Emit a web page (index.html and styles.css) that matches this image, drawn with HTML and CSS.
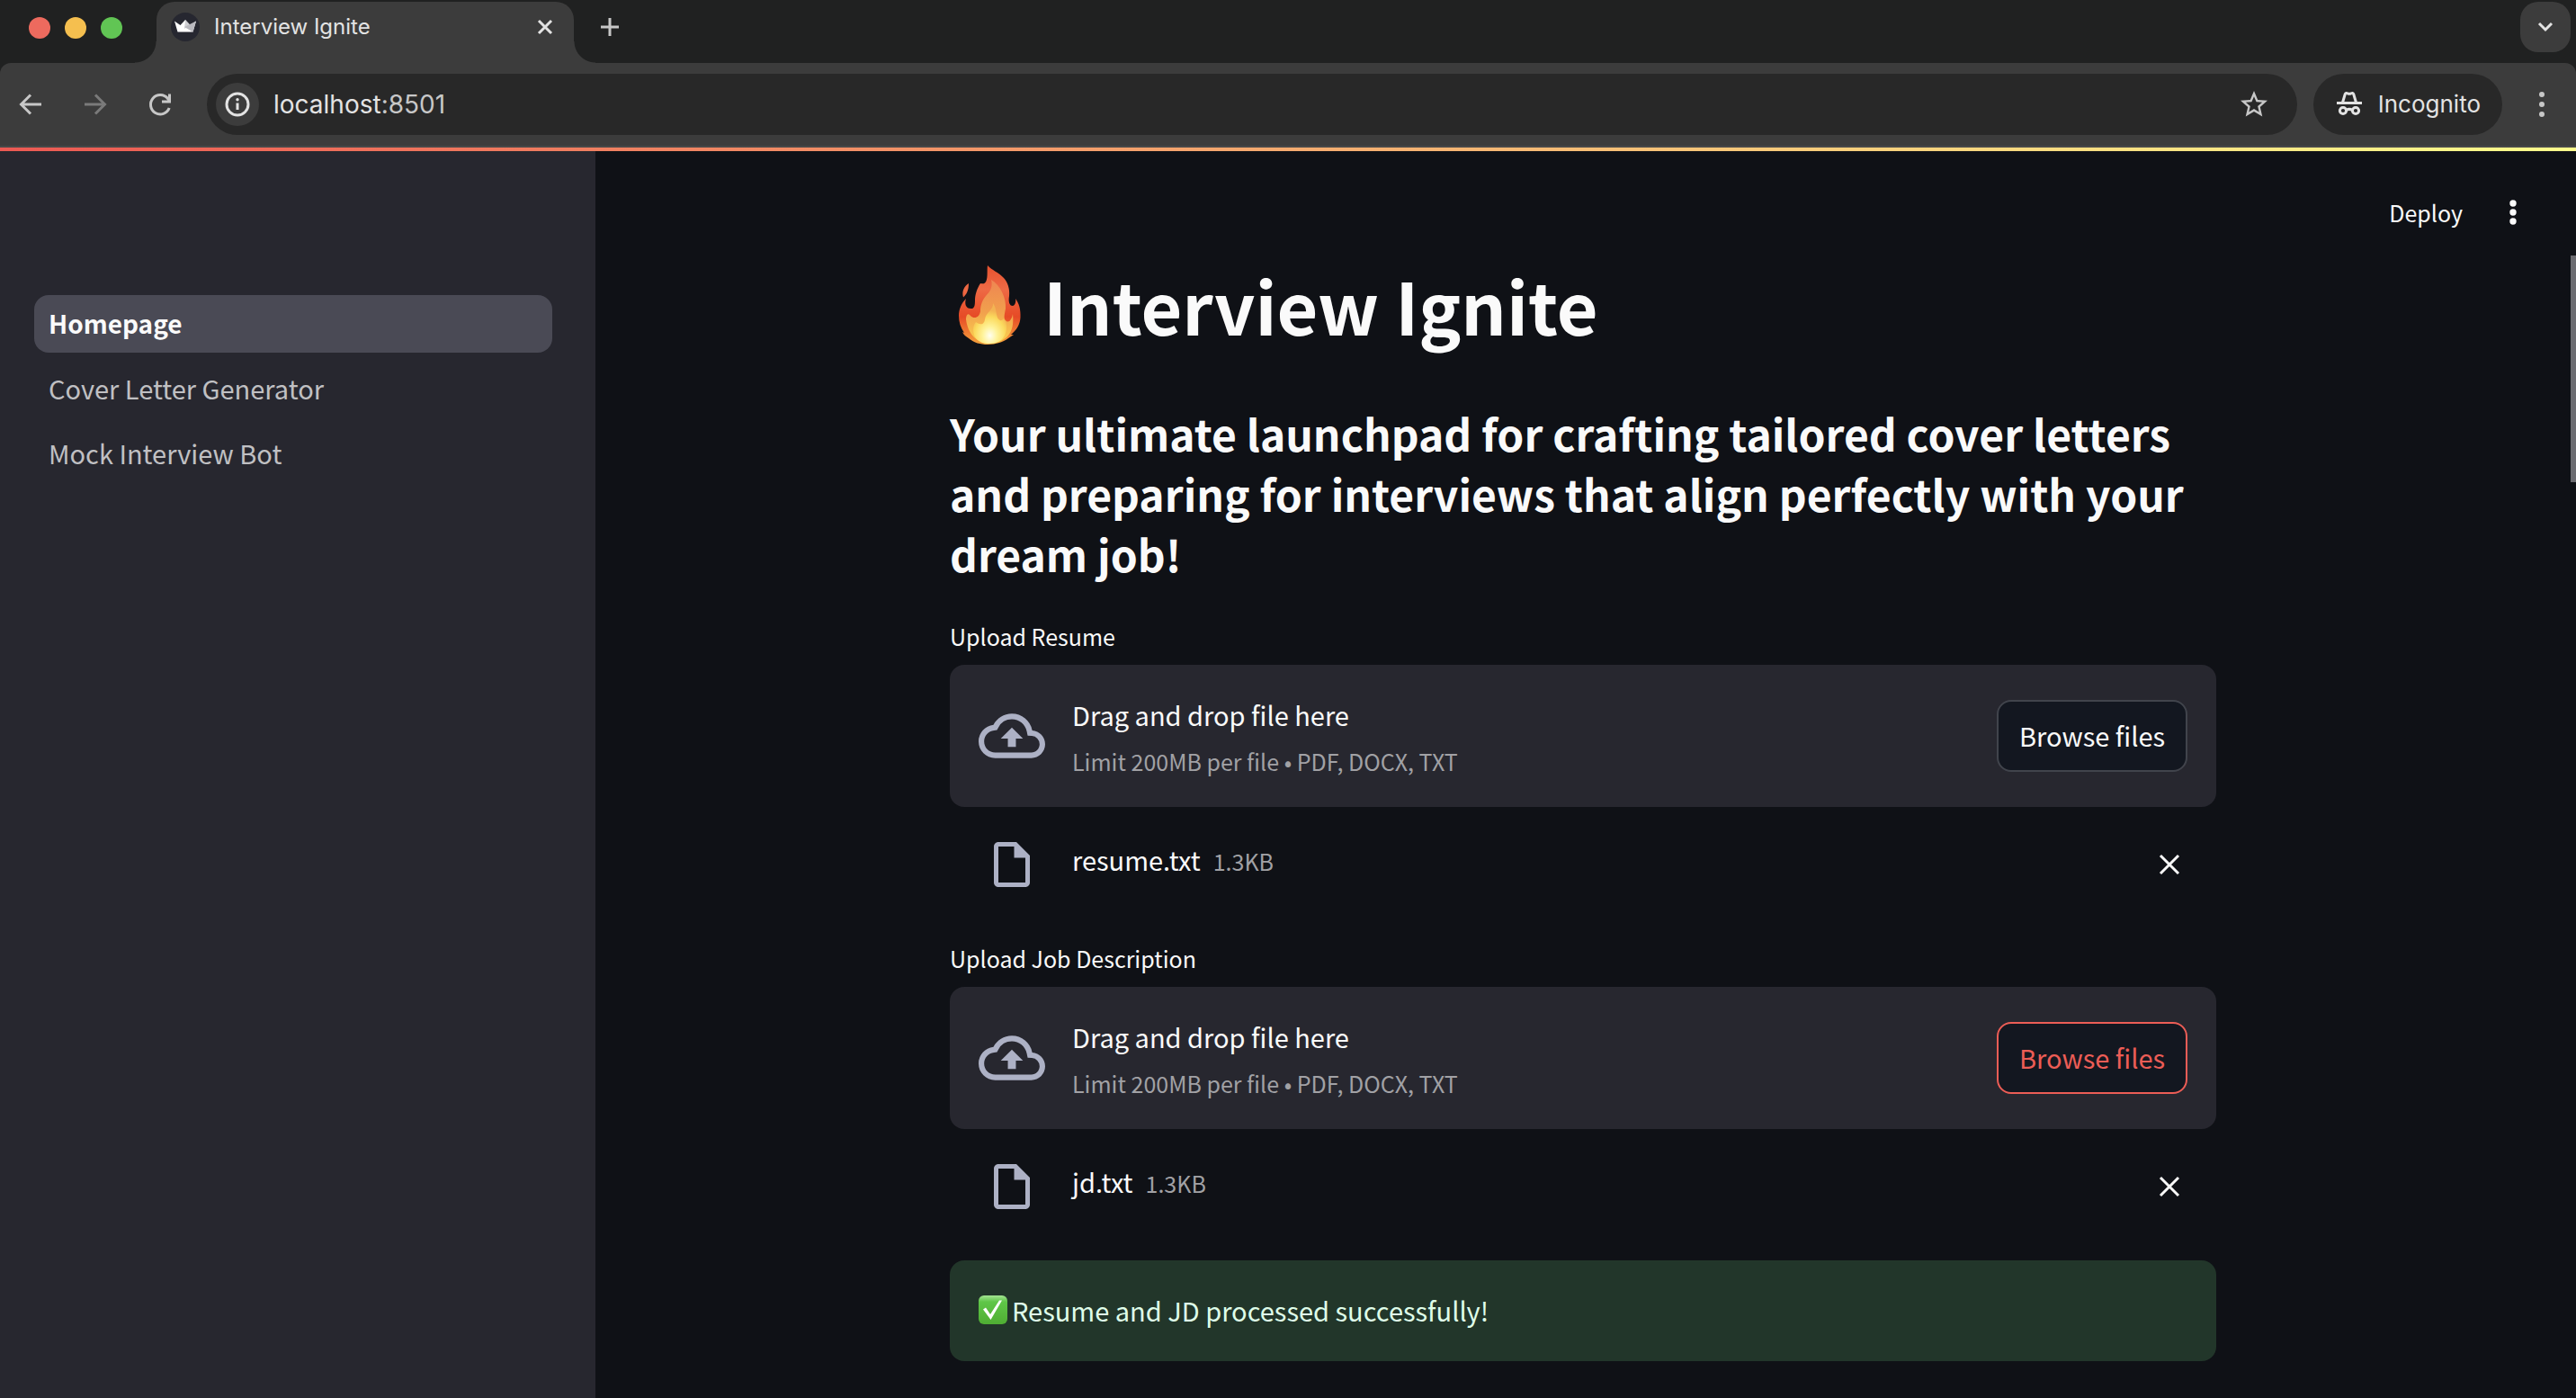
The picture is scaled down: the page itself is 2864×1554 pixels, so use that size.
FILE: index.html
```html
<!DOCTYPE html>
<html lang="en">
<head>
<meta charset="utf-8">
<meta name="viewport" content="width=device-width, initial-scale=1">
<title>Interview Ignite</title>
<link rel="stylesheet" href="styles.css">
</head>
<body>
<div class="browser">
  <div class="tabstrip">
    <div class="lights"><span class="light light-red"></span><span class="light light-yellow"></span><span class="light light-green"></span></div>
    <div class="tab">
      <svg class="favicon" viewBox="0 0 32 32" aria-hidden="true"><circle cx="16" cy="16" r="16" fill="#262730"/><path d="M4 9.500l6.500 4.500L16 8l5.500 6 6.500-4.500L24.500 21.500h-17z" fill="#fff"/><path d="M16 8l5.500 6L15 18z" fill="#d0d0d4"/><path d="M28 9.500L24.500 21.500 15 16z" fill="#b9b9bf"/></svg>
      <span class="tab-title">Interview Ignite</span>
      <button class="icon-button" aria-label="Close tab"><svg width="20" height="20" viewBox="0 0 20 20"><path d="M3 3l14 14M17 3L3 17" class="stroke"/></svg></button>
    </div>
    <button class="icon-button new-tab" aria-label="New tab"><svg width="24" height="24" viewBox="0 0 24 24"><path d="M12 2v20M2 12h20" class="stroke"/></svg></button>
    <button class="icon-button tab-search" aria-label="Search tabs"><svg width="20" height="20" viewBox="0 0 20 20"><path d="M3 6l7 7 7-7" class="stroke"/></svg></button>
  </div>
  <div class="toolbar">
    <div class="nav-buttons">
      <button class="icon-button" aria-label="Back"><svg width="28" height="28" viewBox="0 0 28 28"><path d="M26 14H4M14 3.500L3.500 14 14 24.500" class="stroke"/></svg></button>
      <button class="icon-button forward" aria-label="Forward" disabled><svg width="28" height="28" viewBox="0 0 28 28"><path d="M2 14h22M14 3.500L24.500 14 14 24.500" class="stroke"/></svg></button>
      <button class="icon-button" aria-label="Reload"><svg width="28" height="28" viewBox="0 0 28 28"><path d="M24.200 18A10.700 10.700 0 1 1 22.500 7.500L24 9.500" class="stroke"/><path d="M24.500 2.500v8.500h-8.500" class="stroke"/></svg></button>
    </div>
    <div class="omnibox">
      <button class="icon-button site-info" aria-label="View site information"><svg width="28" height="28" viewBox="0 0 28 28"><circle cx="14" cy="14" r="12" class="stroke"/><path d="M14 12.500v7.500" class="stroke"/><circle cx="14" cy="8.700" r="1.700" fill="currentColor"/></svg></button>
      <div class="url">localhost<span class="port">:8501</span></div>
      <button class="icon-button" aria-label="Bookmark this tab"><svg width="36" height="36" viewBox="0 0 24 24"><path d="M22 9.240l-7.190-.62L12 2 9.190 8.630 2 9.240l5.460 4.730L5.820 21 12 17.270 18.180 21l-1.630-7.030L22 9.240zM12 15.400l-3.760 2.270 1-4.280-3.320-2.880 4.380-.38L12 6.100l1.710 4.040 4.380.38-3.320 2.880 1 4.280L12 15.400z" fill="currentColor"/></svg></button>
    </div>
    <div class="incognito">
      <svg width="32" height="32" viewBox="0 0 32 32" aria-hidden="true"><path d="M2 14.500h28" class="stroke"/><path d="M8.500 14l2.800-9.500c.5-1.300 1.700-1.300 2.600-.8 1.300.8 2.900.8 4.200 0 .9-.5 2.100-.5 2.600.8L23.500 14" class="stroke"/><circle cx="9" cy="23" r="3.600" class="stroke"/><circle cx="23" cy="23" r="3.600" class="stroke"/><path d="M12.500 22.500c2-1.300 5-1.300 7 0" class="stroke"/></svg>
      <span>Incognito</span>
    </div>
    <button class="icon-button" aria-label="Browser menu"><svg width="28" height="28" viewBox="0 0 28 28" fill="currentColor"><circle cx="14" cy="3" r="3"/><circle cx="14" cy="14" r="3"/><circle cx="14" cy="25" r="3"/></svg></button>
  </div>
</div>

<div class="app">
  <nav class="sidebar" aria-label="Pages">
    <a class="page-link active" href="#" aria-current="page">Homepage</a>
    <a class="page-link" href="#">Cover Letter Generator</a>
    <a class="page-link" href="#">Mock Interview Bot</a>
  </nav>
  <div class="view">
    <header class="app-header">
      <button class="deploy">Deploy</button>
      <button class="icon-button app-menu" aria-label="Main menu"><svg width="28" height="28" viewBox="0 0 28 28" fill="currentColor"><circle cx="14" cy="4" r="3.700"/><circle cx="14" cy="14" r="3.700"/><circle cx="14" cy="24" r="3.700"/></svg></button>
    </header>
    <main class="content">
      <h1><svg class="flame" viewBox="0 0 70 88" role="img" aria-label="Fire">
        <defs>
          <linearGradient id="outer" x1="0" y1="0" x2="0" y2="1"><stop offset="0" stop-color="#e5512f"/><stop offset=".3" stop-color="#ee6a45"/><stop offset=".65" stop-color="#e64a26"/><stop offset="1" stop-color="#f5a33c"/></linearGradient>
          <linearGradient id="middle" x1="0" y1="0" x2="0" y2="1"><stop offset="0" stop-color="#ee8552"/><stop offset=".5" stop-color="#f1a04d"/><stop offset="1" stop-color="#fbd24e"/></linearGradient>
          <radialGradient id="core" cx=".5" cy=".8" r=".62"><stop offset="0" stop-color="#fffef0"/><stop offset=".35" stop-color="#fff39a"/><stop offset=".75" stop-color="#fbd95c"/><stop offset="1" stop-color="#f3b453"/></radialGradient>
        </defs>
        <path fill="url(#outer)" d="M32 0C31 6 33 16 29 19.500C27 21 26 20 24 20C20 26 18 33 18 38C18 42 18 47 15 48C8 49 6 43 8 37C3 42 0 49 0 56C0 63 2 69 6 75L4 74C5 77 8 79 11 81C17 86 24 88 32 88C41 88 50 85 55 81L61 77L58 77C64 72 68 66 68.500 58C69 49 67 42 63 37C64 41 62 45 60 45C56 45 55 40 56 34C57 26 54 18 50 14C45 8 36 5 32 0ZM11 20C6 23 3 29 5 35.500C9 32 11 27 11 20Z"/>
        <path fill="url(#middle)" d="M36 16C38 24 35 29 30 34C25 40 24 46 24 51C23 58 17 60 13 56C10 52 8 55 8 60C9 68 12 75 17 80C22 84 27 87 34 87C42 87 49 84 54 79C60 73 61 64 60 54C59 60 56 64 53 62C49 60 51 54 52 48C53 36 46 22 36 16Z"/>
        <path fill="url(#core)" d="M38 42c1 7-8 10-9 18-1 7-6 6-10 3-4 4-4 13 0 18 4 5 10 6 15 6 8 0 14-3 17-9 3-7 3-14-1-19-2 3-5 3-7-1-2-5-1-10-5-16z"/>
      </svg><span>Interview Ignite</span></h1>
      <h3>Your ultimate launchpad for crafting tailored cover letters and preparing for interviews that align perfectly with your dream job!</h3>

      <section class="uploader" aria-labelledby="resume-label">
        <p class="uploader-label" id="resume-label">Upload Resume</p>
        <div class="dropzone">
          <svg class="cloud" viewBox="0 0 24 16" aria-hidden="true"><path d="M19.350 6.040A7.490 7.490 0 0 0 12 0C9.110 0 6.600 1.640 5.350 4.040A5.994 5.994 0 0 0 0 10c0 3.310 2.690 6 6 6h13c2.760 0 5-2.240 5-5 0-2.640-2.050-4.780-4.650-4.960zM19 14H6c-2.210 0-4-1.790-4-4 0-2.050 1.530-3.760 3.560-3.970l1.070-.11.5-.95A5.469 5.469 0 0 1 12 2c2.620 0 4.880 1.860 5.390 4.430l.3 1.500 1.530.11A2.980 2.980 0 0 1 22 11c0 1.650-1.350 3-3 3zM8 9h2.550v3h2.900V9H16l-4-4z"/></svg>
          <div class="dropzone-text"><span class="prompt">Drag and drop file here</span><span class="limit">Limit 200MB per file • PDF, DOCX, TXT</span></div>
          <button class="browse">Browse files</button>
        </div>
        <div class="file-row">
          <span class="file-cell"><svg class="file-icon" viewBox="4 2 16 20" aria-hidden="true"><path d="M14 2H6c-1.100 0-1.990.9-1.990 2L4 20c0 1.100.89 2 1.990 2H18c1.100 0 2-.9 2-2V8l-6-6zM6 20V4h7v5h5v11H6z"/></svg></span>
          <div class="file-info"><span class="file-name">resume.txt</span><span class="file-size">1.3KB</span></div>
          <button class="icon-button remove" aria-label="Remove resume.txt"><svg width="24" height="24" viewBox="0 0 24 24"><path d="M2 2l20 20M22 2L2 22" class="stroke"/></svg></button>
        </div>
      </section>

      <section class="uploader" aria-labelledby="jd-label">
        <p class="uploader-label" id="jd-label">Upload Job Description</p>
        <div class="dropzone">
          <svg class="cloud" viewBox="0 0 24 16" aria-hidden="true"><path d="M19.350 6.040A7.490 7.490 0 0 0 12 0C9.110 0 6.600 1.640 5.350 4.040A5.994 5.994 0 0 0 0 10c0 3.310 2.690 6 6 6h13c2.760 0 5-2.240 5-5 0-2.640-2.050-4.780-4.650-4.960zM19 14H6c-2.210 0-4-1.790-4-4 0-2.050 1.530-3.760 3.560-3.970l1.070-.11.5-.95A5.469 5.469 0 0 1 12 2c2.620 0 4.880 1.860 5.390 4.430l.3 1.500 1.530.11A2.980 2.980 0 0 1 22 11c0 1.650-1.350 3-3 3zM8 9h2.550v3h2.900V9H16l-4-4z"/></svg>
          <div class="dropzone-text"><span class="prompt">Drag and drop file here</span><span class="limit">Limit 200MB per file • PDF, DOCX, TXT</span></div>
          <button class="browse focused">Browse files</button>
        </div>
        <div class="file-row">
          <span class="file-cell"><svg class="file-icon" viewBox="4 2 16 20" aria-hidden="true"><path d="M14 2H6c-1.100 0-1.990.9-1.990 2L4 20c0 1.100.89 2 1.990 2H18c1.100 0 2-.9 2-2V8l-6-6zM6 20V4h7v5h5v11H6z"/></svg></span>
          <div class="file-info"><span class="file-name">jd.txt</span><span class="file-size">1.3KB</span></div>
          <button class="icon-button remove" aria-label="Remove jd.txt"><svg width="24" height="24" viewBox="0 0 24 24"><path d="M2 2l20 20M22 2L2 22" class="stroke"/></svg></button>
        </div>
      </section>

      <div class="alert" role="status">
        <svg width="32" height="32" viewBox="0 0 32 32" role="img" aria-label="Done"><defs><linearGradient id="check" x1="0" y1="0" x2="0" y2="1"><stop offset="0" stop-color="#a5e594"/><stop offset=".22" stop-color="#5fc648"/><stop offset="1" stop-color="#4fae33"/></linearGradient></defs><rect width="32" height="32" rx="6" fill="url(#check)"/><path d="M5 15.500l3-2 5 7.500L23 5.500h3L13.500 27z" fill="#fff"/></svg>
        <span>Resume and JD processed successfully!</span>
      </div>
    </main>
    <div class="scroll-thumb"></div>
  </div>
</div>
</body>
</html>
```

FILE: styles.css
```css
*, *::before, *::after { box-sizing: border-box; }

:root {
  --strip: #202121;
  --chrome: #3c3c3c;
  --field: #282828;
  --bg: #0f1116;
  --panel: #27272f;
  --text: #fafafa;
  --muted: #a1a1a5;
  --accent: #ec5d56;
}

body {
  margin: 0;
  min-height: 100vh;
  display: flex;
  flex-direction: column;
  background: var(--bg);
  color: var(--text);
  font-family: "Noto Sans CJK JP", "Noto Sans CJK SC", sans-serif;
  font-size: 29px;
  line-height: 40px;
}

h1, h3, p { margin: 0; }
svg { display: block; flex: none; }
button { font: inherit; color: inherit; border: 0; padding: 0; background: none; }

.stroke { fill: none; stroke: currentColor; stroke-width: 3; }

.icon-button {
  display: flex;
  align-items: center;
  justify-content: center;
  flex: none;
  width: 40px;
  height: 40px;
}

/* Browser window */
.browser {
  background: var(--strip);
  color: #c7c7c7;
  font-family: Inter, "Liberation Sans", sans-serif;
}

.tabstrip { display: flex; height: 70px; padding: 2px 6px 0 32px; }
.lights { display: flex; gap: 16px; padding-top: 17px; }
.light { width: 24px; height: 24px; border-radius: 50%; }
.light-red { background: #ed6a5e; }
.light-yellow { background: #f5bf4f; }
.light-green { background: #61c554; }

.tab {
  position: relative;
  display: flex;
  align-items: flex-start;
  width: 464px;
  margin-left: 38px;
  padding: 8px 12px 0 16px;
  border-radius: 20px 20px 0 0;
  background: var(--chrome);
  color: #e3e3e3;
  font-size: 24px;
}
.tab::before, .tab::after {
  content: "";
  position: absolute;
  bottom: 0;
  width: 24px;
  height: 24px;
}
.tab::before { left: -24px; background: radial-gradient(circle at 0 0, transparent 23px, var(--chrome) 24px); }
.tab::after { right: -24px; background: radial-gradient(circle at 100% 0, transparent 23px, var(--chrome) 24px); }
.favicon { width: 32px; height: 32px; margin: 4px 16px 0 0; }
.tab-title { flex: 1; }
.new-tab { margin: 8px 0 0 20px; }
.tab-search {
  width: 56px;
  height: 56px;
  margin-left: auto;
  border-radius: 20px;
  background: var(--chrome);
  color: #e3e3e3;
}

.toolbar {
  display: flex;
  align-items: center;
  height: 94px;
  padding: 0 18px 0 14px;
  border-bottom: 2px solid #484848;
  border-radius: 12px 12px 0 0;
  background: var(--chrome);
}
.nav-buttons { display: flex; gap: 32px; margin-right: 32px; }
.forward { color: #7a7a7a; }
.omnibox {
  flex: 1;
  display: flex;
  align-items: center;
  height: 68px;
  padding: 0 28px 0 10px;
  border-radius: 34px;
  background: var(--field);
}
.site-info { width: 48px; height: 48px; border-radius: 50%; background: var(--chrome); color: #e3e3e3; }
.url { flex: 1; margin-left: 16px; color: #e3e3e3; font-size: 28px; }
.port { color: #c7c7c7; }
.incognito {
  display: flex;
  align-items: center;
  gap: 16px;
  height: 68px;
  margin: 0 24px 0 18px;
  padding: 0 24px;
  border-radius: 34px;
  background: var(--field);
  color: #e3e3e3;
  font-size: 26px;
}

/* Application */
.app {
  flex: 1;
  display: flex;
  padding-top: 4px;
  background: linear-gradient(90deg, #ec5953, #fffd8c) top / 100% 4px no-repeat;
}

.sidebar {
  flex: none;
  display: flex;
  flex-direction: column;
  gap: 8px;
  width: 662px;
  padding: 160px 48px 0 38px;
  background: var(--panel);
}
.page-link {
  padding: 11px 16px 13px;
  border-radius: 16px;
  color: #c0c0c3;
  text-decoration: none;
}
.page-link.active { background: #4a4a55; color: var(--text); font-size: 28px; font-weight: 700; }

.view { position: relative; flex: 1; padding-right: 6px; }
.scroll-thumb {
  position: absolute;
  top: 116px;
  right: 0;
  width: 6px;
  height: 252px;
  background: #6b6b70;
}

.app-header {
  display: flex;
  justify-content: flex-end;
  align-items: center;
  gap: 36px;
  padding: 48px 44px 0 0;
}
.deploy { font-size: 25px; }

.content { max-width: 1408px; margin: 30px auto 0; }

h1 {
  display: flex;
  align-items: center;
  gap: 24px;
  padding-left: 10px;
  font-size: 79px;
  line-height: 106px;
  font-weight: 700;
}
.flame { width: 70px; height: 88px; }
h3 { margin-top: 56px; font-size: 48px; line-height: 67px; font-weight: 700; }

.uploader { margin-top: 58px; }
h3 + .uploader { margin-top: 38px; }
.uploader-label { margin-bottom: 12px; font-size: 25px; }
.dropzone {
  display: flex;
  align-items: center;
  gap: 30px;
  height: 158px;
  padding: 0 32px;
  border-radius: 16px;
  background: var(--panel);
}
.cloud { width: 74px; height: 50px; fill: #adb1c5; }
.dropzone-text { flex: 1; display: flex; flex-direction: column; gap: 12px; padding-top: 4px; }
.limit, .file-size { color: var(--muted); font-size: 25px; }
.browse {
  width: 212px;
  height: 80px;
  padding-bottom: 2px;
  border: 2px solid #41444c;
  border-radius: 16px;
  background: #131720;
}
.browse.focused { border-color: var(--accent); color: var(--accent); }

.file-row { display: flex; align-items: center; gap: 30px; margin-top: 38px; padding: 0 32px; }
.file-cell { display: flex; justify-content: center; width: 74px; }
.file-icon { width: 40px; height: 50px; fill: #adb1c5; }
.file-info { flex: 1; display: flex; align-items: baseline; gap: 14px; padding-bottom: 10px; }

.alert {
  display: flex;
  align-items: center;
  gap: 5px;
  margin: 56px 0 32px;
  padding: 35px 32px 37px;
  border-radius: 16px;
  background: #22362a;
  color: #dffde9;
}
```
